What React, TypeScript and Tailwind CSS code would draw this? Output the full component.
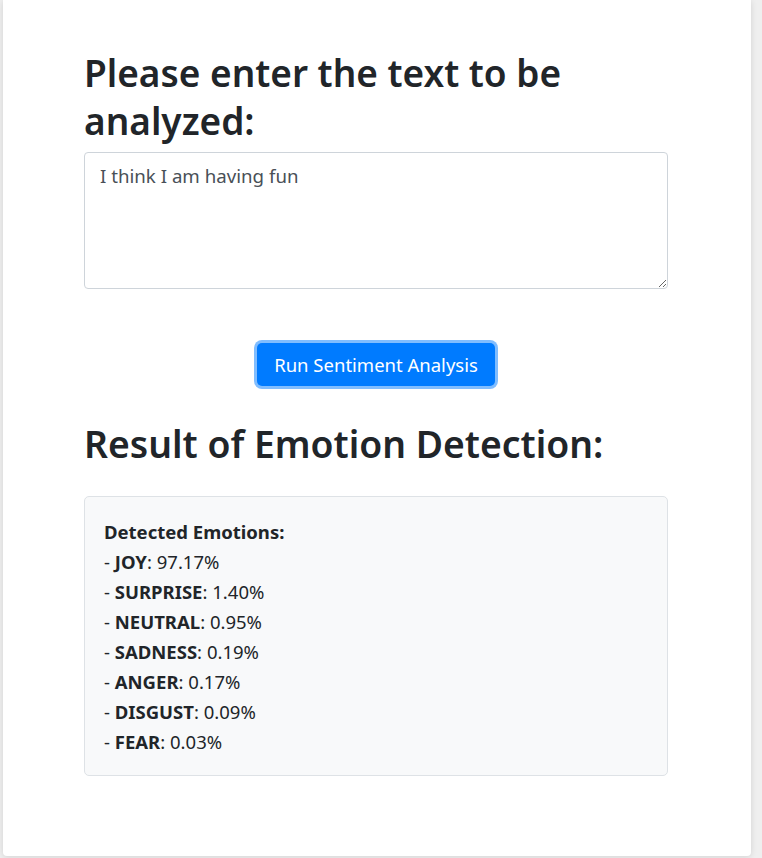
const emotions: { name: string; score: string }[] = [
  { name: "JOY", score: "97.17%" },
  { name: "SURPRISE", score: "1.40%" },
  { name: "NEUTRAL", score: "0.95%" },
  { name: "SADNESS", score: "0.19%" },
  { name: "ANGER", score: "0.17%" },
  { name: "DISGUST", score: "0.09%" },
  { name: "FEAR", score: "0.03%" },
];

export default function App() {
  return (
    <div
      className="min-h-[858px] bg-[#efefef] pl-[3px] pr-[11px] pb-[1px]"
      style={{ fontFamily: '"Noto Sans", "Open Sans", sans-serif' }}
    >
      <div className="h-[856px] bg-white rounded-b-[4px] shadow-[0_1px_6px_rgba(0,0,0,0.12)] pl-[81px] pr-[83px] pt-[49px] text-[#212529]">
        {/* Input section */}
        <h1 className="text-[37px] leading-[48px] font-semibold">
          Please enter the text to be analyzed:
        </h1>
        <textarea
          className="mt-[7px] block w-full h-[137px] border border-[#ced4da] rounded-[4px] px-[15px] py-[9px] text-[18.7px] leading-[28px] text-[#495057] resize-y outline-none"
          defaultValue="I think I am having fun"
        />

        <div className="flex justify-center mt-[54px]">
          <button className="h-[43px] px-[17px] rounded-[5px] bg-[#007bff] text-white text-[18.5px] ring-[3px] ring-[#80bdff]">
            Run Sentiment Analysis
          </button>
        </div>

        {/* Result section */}
        <h2 className="mt-[34px] text-[37.3px] leading-[48px] font-semibold">
          Result of Emotion Detection:
        </h2>
        <div className="mt-[28px] h-[280px] bg-[#f8f9fa] border border-[#dee2e6] rounded-[5px] px-[19px] pt-[20px] text-[18.5px] leading-[30px]">
          <div className="font-bold">Detected Emotions:</div>
          {emotions.map((e) => (
            <div key={e.name}>
              - <span className="font-bold">{e.name}</span>: {e.score}
            </div>
          ))}
        </div>
      </div>
    </div>
  );
}
